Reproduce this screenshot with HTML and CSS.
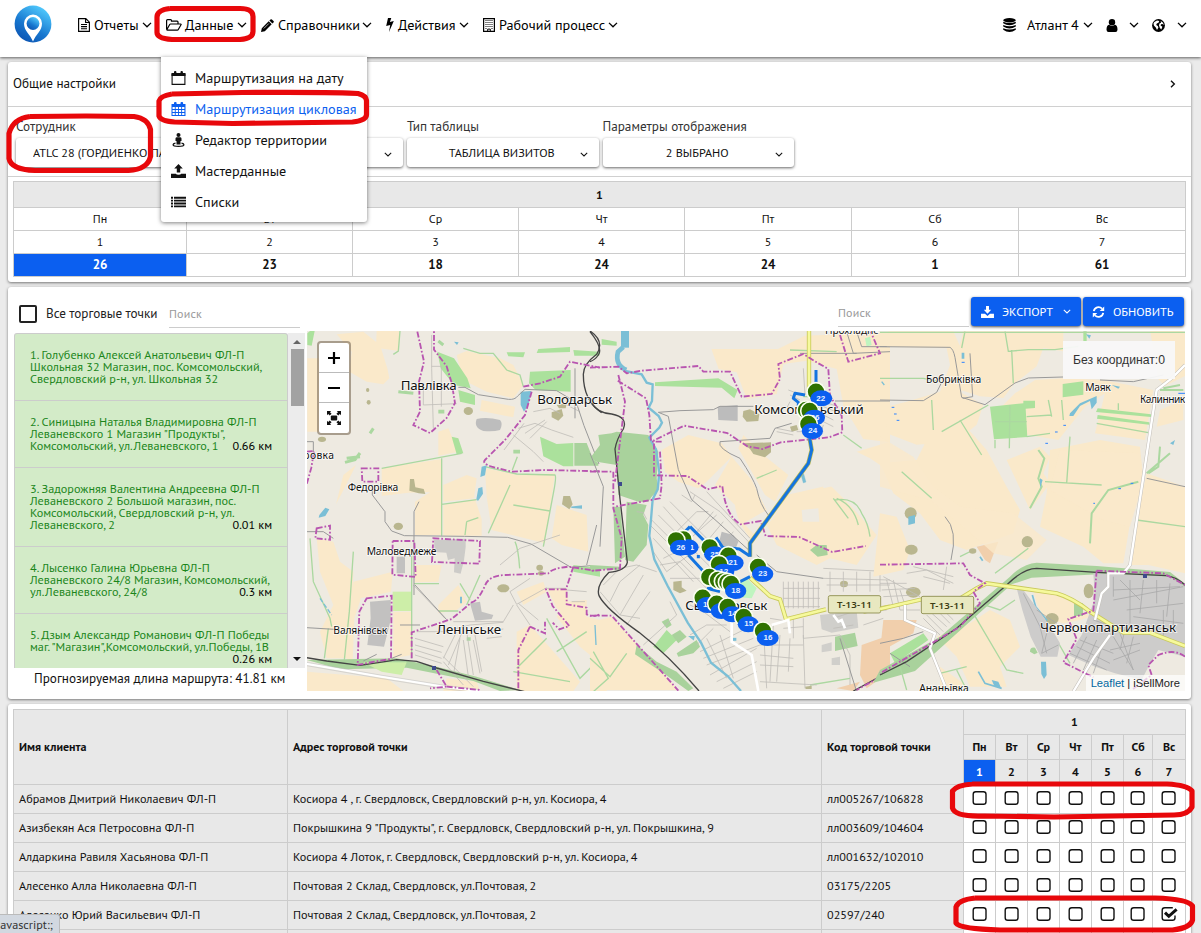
FILE: index.html
```html
<!DOCTYPE html>
<html lang="ru">
<head>
<meta charset="utf-8">
<title>iSellMore</title>
<link rel="stylesheet" href="styles.css">
</head>
<body>
<svg class="defs" width="0" height="0">
  <symbol id="chev" viewBox="0 0 10 6"><path d="M1 .9 5 4.8 9 .9" fill="none" stroke="currentColor" stroke-width="1.3"/></symbol>
  <symbol id="file" viewBox="0 0 12 14"><path d="M.6.6h7.2l3.6 3.6v9.2H.6zM7.6.8v3.7h3.7M3 6.5h6M3 8.6h6M3 10.7h6" fill="none" stroke="currentColor" stroke-width="1.15"/></symbol>
  <symbol id="folder" viewBox="0 0 16 12"><path d="M.6 10V1.6Q.6.7 1.5.7H4.600q.9 0 .9.9v.6h5.600q.9 0 .9.9v1.800M.8 10.800 3.700 5.500q.3-.5.9-.5h10q.9 0 .4.8l-2.700 4.700q-.3.6-1 .6H1.400q-.8 0-.8-.9" fill="none" stroke="currentColor" stroke-width="1.200"/></symbol>
  <symbol id="pencil" viewBox="0 0 13 13"><path fill="currentColor" d="M0 13 .8 9.200 7.700 2.300 10.700 5.300 3.800 12.200ZM8.400 1.600 9.500.5q.7-.7 1.400 0l1.600 1.600q.7.7 0 1.400l-1.100 1.100Z"/><path d="m2.800 9.500 5-5" stroke="#fff" stroke-width=".7"/></symbol>
  <symbol id="bolt" viewBox="0 0 8 14"><path fill="currentColor" d="M2 0h3.300L3.900 3.900 7.800 3 3 14 4.200 6.900.2 7.900Z"/></symbol>
  <symbol id="building" viewBox="0 0 12 14"><path d="M.6.600h10.800v12.800H.6z" fill="none" stroke="currentColor" stroke-width="1.200"/><path d="M2.500 2.500h7M2.500 4.500h7M2.500 6.500h7M2.500 8.500h7" stroke="currentColor" stroke-dasharray="1 1"/><path d="M2.500 10.500h1M8.500 10.500h1M4.700 13.500v-2.400h2.600v2.400" stroke="currentColor" fill="none"/></symbol>
  <symbol id="db" viewBox="0 0 13 14"><g fill="currentColor"><ellipse cx="6.500" cy="2.200" rx="6.300" ry="2.200"/><path d="M.2 3.700q6.300 2.600 12.600 0v1.500q-6.300 4-12.600 0zM.2 7q6.300 2.600 12.600 0v1.500q-6.300 4-12.600 0zM.2 10.300q6.300 2.600 12.600 0v1.400q-6.300 4.500-12.600 0z"/></g></symbol>
  <symbol id="user" viewBox="0 0 12 13"><g fill="currentColor"><circle cx="6" cy="3.200" r="3.200"/><path d="M3 5.800Q6 8 9 5.800q2.500.6 2.500 5-.1 2.200-2 2.200h-7q-1.900 0-2-2.200 0-4.400 2.500-5"/></g></symbol>
  <symbol id="globe" viewBox="0 0 13 13"><circle cx="6.500" cy="6.500" r="6.400" fill="currentColor"/><path fill="#fff" d="M2.400 2.900 5 1.500 7.300 2 6.500 3.800 4.800 4.400 4.200 6 5.800 7.100 6.400 8.500 5 11 3.800 8.400 1.900 6.600 1.500 4.600ZM8.700 1.900 11 3.700 11.800 6 10.500 5 9 5.200 8.600 6.600 10.400 7.800 9.300 10.600 7.900 9 7 6.600 7.400 4.600 9 3.800Z"/></symbol>
  <symbol id="cal" viewBox="0 0 14 14"><path d="M.6 3.200h12.800v10.200H.6z" fill="none" stroke="currentColor" stroke-width="1.100"/><path fill="currentColor" d="M0 2h14v3H0z"/><rect x="2.500" width="2.400" height="4" rx="1" fill="currentColor"/><rect x="9" width="2.400" height="4" rx="1" fill="currentColor"/></symbol>
  <symbol id="calgrid" viewBox="0 0 14 14"><path fill="currentColor" d="M0 2h14v12H0z"/><rect x="2.500" width="2.600" height="4" rx="1" fill="currentColor"/><rect x="9" width="2.600" height="4" rx="1" fill="currentColor"/><path d="M1 6h12M1 9h12M1 12h12" stroke="#fff" stroke-width="1.900" stroke-dasharray="2.300 .9"/></symbol>
  <symbol id="street" viewBox="0 0 12 14"><g fill="currentColor"><circle cx="6" cy="2" r="2"/><path d="M4 4.200h4q1 .2 1 1.400V8H8v3.500H4V8H3V5.600q0-1.200 1-1.400"/></g><path d="M3 10.200Q.6 10.700.6 11.700.6 13.300 6 13.300t5.400-1.600q0-1-2.400-1.500" fill="none" stroke="currentColor" stroke-width="1.300"/></symbol>
  <symbol id="upload" viewBox="0 0 14 13"><path fill="currentColor" d="M7 0l4 4.200H8.600V8H5.400V4.200H3zM0 9h4.500q.4 1 2.500 1t2.500-1H14v4H0z"/></symbol>
  <symbol id="download" viewBox="0 0 14 13"><path fill="currentColor" d="M5.400 0h3.200v4H11L7 8.300 3 4h2.400zM0 8.500h4.300L7 10.700 9.700 8.500H14V13H0z"/></symbol>
  <symbol id="list" viewBox="0 0 15 11"><path d="M0 1.200h2M3 1.200h12M0 4.100h2M3 4.100h12M0 7h2M3 7h12M0 9.900h2M3 9.900h12" stroke="currentColor" stroke-width="1.900"/></symbol>
  <symbol id="refresh" viewBox="0 0 12 12"><path d="M1.300 5.200A4.800 4.800 0 0 1 9.500 2.600M10.700 6.800A4.800 4.800 0 0 1 2.500 9.400" fill="none" stroke="currentColor" stroke-width="1.800"/><path fill="currentColor" d="M11.700.4v4.500H7.200zM.3 11.600V7.100h4.500z"/></symbol>
  <symbol id="expand" viewBox="0 0 14 14"><path fill="currentColor" d="M0 0h4.200L3 1.200 4.600 2.700 2.700 4.600 1.200 3 0 4.200zM14 0v4.200L12.800 3l-1.500 1.600-1.900-1.900L11 1.200 9.800 0zM0 14V9.800L1.200 11l1.500-1.600 1.900 1.900L3 12.800 4.200 14zM14 14H9.800l1.200-1.200-1.600-1.500 1.900-1.900 1.500 1.600L14 9.800z"/><rect x="3.800" y="4.400" width="6.400" height="5.200" rx="1" fill="currentColor"/></symbol>
  <symbol id="box" viewBox="0 0 18 16"><rect x="1.700" y="1.700" width="12.800" height="12.600" rx="2.600" fill="none" stroke="currentColor" stroke-width="1.400"/></symbol>
  <symbol id="boxon" viewBox="0 0 18 16"><path d="M14.500 9.500v2.200q0 2.600-2.600 2.600H4.300q-2.600 0-2.600-2.600V4.300q0-2.600 2.600-2.600h8" fill="none" stroke="currentColor" stroke-width="1.400"/><path d="m4.500 6.700 3.800 3.600 7.800-7" fill="none" stroke="currentColor" stroke-width="3"/></symbol>
</svg>

<header class="topbar">
  <svg class="logo" viewBox="0 0 38 38">
    <defs><linearGradient id="lg" x1="0" y1="1" x2=".6" y2="0"><stop offset="0" stop-color="#0848a8"/><stop offset=".5" stop-color="#1878d0"/><stop offset="1" stop-color="#4cc4fa"/></linearGradient></defs>
    <circle cx="19" cy="19" r="18.400" fill="url(#lg)"/>
    <path d="M19 36.500C16 29 10 26 10 18.500A9 9 0 0 1 28 18.500C28 26 22 29 19 36.500Z" fill="#fff"/>
    <circle cx="19" cy="18.500" r="6.400" fill="url(#lg)"/>
  </svg>
  <nav class="nav">
    <a class="nav-item n1"><svg class="i12x14"><use href="#file"/></svg><span>Отчеты</span><svg class="chev"><use href="#chev"/></svg></a>
    <a class="nav-item n2"><svg class="i16x12"><use href="#folder"/></svg><span>Данные</span><svg class="chev"><use href="#chev"/></svg></a>
    <a class="nav-item n3"><svg class="i13"><use href="#pencil"/></svg><span>Справочники</span><svg class="chev"><use href="#chev"/></svg></a>
    <a class="nav-item n4"><svg class="i8x14"><use href="#bolt"/></svg><span>Действия</span><svg class="chev"><use href="#chev"/></svg></a>
    <a class="nav-item n5"><svg class="i12x14"><use href="#building"/></svg><span>Рабочий процесс</span><svg class="chev"><use href="#chev"/></svg></a>
  </nav>
  <div class="account">
    <a class="acc a1"><svg class="i13x14"><use href="#db"/></svg><span>Атлант 4</span><svg class="chev"><use href="#chev"/></svg></a>
    <a class="acc a2"><svg class="i12x13"><use href="#user"/></svg><svg class="chev"><use href="#chev"/></svg></a>
    <a class="acc a3"><svg class="i13"><use href="#globe"/></svg><svg class="chev"><use href="#chev"/></svg></a>
  </div>
</header>

<div class="menu">
  <a class="menu-item"><svg class="mi"><use href="#cal"/></svg><span>Маршрутизация на дату</span></a>
  <a class="menu-item active"><svg class="mi"><use href="#calgrid"/></svg><span>Маршрутизация цикловая</span></a>
  <a class="menu-item"><svg class="mi"><use href="#street"/></svg><span>Редактор территории</span></a>
  <a class="menu-item"><svg class="mi"><use href="#upload"/></svg><span>Мастерданные</span></a>
  <a class="menu-item"><svg class="mi"><use href="#list"/></svg><span>Списки</span></a>
</div>

<main class="page">
  <section class="card settings">
    <div class="settings-head"><span>Общие настройки</span><svg class="right" viewBox="0 0 6 8"><path d="M1 .8 4.300 4 1 7.200" fill="none" stroke="#111" stroke-width="1.400"/></svg></div>
    <div class="filters">
      <label class="field"><span class="lbl">Сотрудник</span><span class="select first"><b>ATLC 28 (ГОРДИЕНКО ПАВЕЛ)</b></span></label>
      <label class="field"><span class="lbl">&nbsp;</span><span class="select"><b></b><svg class="chev s"><use href="#chev"/></svg></span></label>
      <label class="field"><span class="lbl">Тип таблицы</span><span class="select"><b>ТАБЛИЦА ВИЗИТОВ</b><svg class="chev s"><use href="#chev"/></svg></span></label>
      <label class="field"><span class="lbl">Параметры отображения</span><span class="select"><b>2 ВЫБРАНО</b><svg class="chev s"><use href="#chev"/></svg></span></label>
    </div>
    <table class="week">
      <colgroup><col class="w173"><col class="w166"><col class="w166"><col class="w166"><col class="w167"><col class="w167"><col class="w167"></colgroup>
      <tr class="wh"><th colspan="7">1</th></tr>
      <tr><td>Пн</td><td>Вт</td><td>Ср</td><td>Чт</td><td>Пт</td><td>Сб</td><td>Вс</td></tr>
      <tr><td>1</td><td>2</td><td>3</td><td>4</td><td>5</td><td>6</td><td>7</td></tr>
      <tr class="tot"><td class="sel">26</td><td>23</td><td>18</td><td>24</td><td>24</td><td>1</td><td>61</td></tr>
    </table>
  </section>

  <section class="card route">
    <div class="toolbar">
      <span class="check"></span><span class="all">Все торговые точки</span>
      <span class="search">Поиск</span>
      <span class="search far">Поиск</span>
      <a class="btn exp"><svg class="bi"><use href="#download"/></svg><span>ЭКСПОРТ</span><svg class="chev s"><use href="#chev"/></svg></a>
      <a class="btn upd"><svg class="bi"><use href="#refresh"/></svg><span>ОБНОВИТЬ</span></a>
    </div>
    <div class="route-body">
      <div class="side">
        <div class="list-wrap">
          <div class="list">
            <div class="stop"><p>1. Голубенко Алексей Анатольевич ФЛ-П<br>Школьная 32 Магазин, пос. Комсомольский,<br>Свердловский р-н, ул. Школьная 32</p></div>
            <div class="stop"><p>2. Синицына Наталья Владимировна ФЛ-П<br>Леваневского 1 Магазин "Продукты",<br>Комсомольский, ул.Леваневского, 1</p><i>0.66 км</i></div>
            <div class="stop"><p>3. Задорожняя Валентина Андреевна ФЛ-П<br>Леваневского 2 Большой магазин, пос.<br>Комсомольский, Свердловский р-н, ул.<br>Леваневского, 2</p><i>0.01 км</i></div>
            <div class="stop"><p>4. Лысенко Галина Юрьевна ФЛ-П<br>Леваневского 24/8 Магазин, Комсомольский,<br>ул.Леваневского, 24/8</p><i>0.3 км</i></div>
            <div class="stop"><p>5. Дзым Александр Романович ФЛ-П Победы<br>маг. "Магазин",Комсомольский, ул.Победы, 1В<br>&nbsp;</p><i>0.26 км</i></div>
          </div>
          <div class="scroll"><span class="up"></span><span class="thumb"></span><span class="down"></span></div>
        </div>
        <div class="total">Прогнозируемая длина маршрута: 41.81 км</div>
      </div>
      <div class="map">
        <svg class="tiles" viewBox="307 331 878 360">
          <rect x="307" y="331" width="878" height="360" fill="#eeeae1"/>
          <!-- west -->
          <g transform="translate(300 325) scale(.33333)">
            <g class="field-a">
              <path d="M110 28 190 20 240 60 262 130 268 160 250 178 200 170 148 140 155 80ZM230 18h68l-2 60-68-10ZM22 100h35v220H22ZM470 90 500 78 600 100 640 120 670 180 640 220 560 200 500 170 480 130ZM545 225l100 20-5 32-100-20ZM415 320l30-10 30 70-60 12ZM130 450l38-30-30 60-30 58ZM245 430l180-28v98l-100 3-80 10ZM345 530l80-50v150h-80ZM430 540l95-18 20 60 0 50H430ZM555 430l100 20 110-5-30 210-160-40-15-100ZM430 480l70-30 30 10-8 60-92 10ZM770 540l90 30 5 110-80-20-30-20ZM50 640l50 10 20 60 40 30-8 260H80l-20-80 40-80-40-100ZM160 770l118-30-5 60-90 20-20 60-5 130h-18ZM280 860h55v130l-55 10ZM345 720h80l-10 50-70 2ZM415 840l60-60 25 50-30 25-55 10ZM650 800l80-30 10 30-70 40ZM740 790l60 0 10 90-40-30ZM800 830l60-5 0 50 40 10v130l-60-50-70-90ZM650 920l40-20 150 170-20 28H650ZM20 1040l240 20 50 38H20ZM440 1060l90 10 10 28H430Z"/>
            </g>
            <g fill="#abe19c">
              <path d="M30 18h14L35 62 22 60V25ZM412 80l50 20 40 60 10 30-50-10-40-50ZM475 195l50 15v30l-45-10ZM690 140l122-5v65l-105-5-20-20ZM620 82h55l-5 15-45-3ZM715 72l95-6v15l-100 3ZM820 75l78 5v12h-75ZM720 335l50 22 50-3v70h-30l-60-30ZM455 335l20 5 15 45-20 3Z"/>
              <path d="M823 354l37 0 20 50 15 10v8h-72Z" fill="#a9d29c"/>
              <path d="M278 800h57v58h-57Z" fill="#cdeea8"/>
              <path d="M20 1005l270-5 120 25 120 30 130 40-60 3-80-30-200-40-200 5Z" fill="#a9d29c"/>
              <path d="M190 1012l130 0 -15 38-60-10Z" fill="#cdeea8"/>
              <path d="M820 720l80 10v25l-80-15Z"/>
            </g>
            <g class="hedge">
              <path d="M245 430l240-45M425 400v232M425 538l105-14M555 425l95 22 115 3q5 5-5 55l-30 160M630 480l-65 145M652 395l-15 40M640 540l110 18M490 70l50 15 40 0 40 50 40 15 10 35M300 18l-5 60-15 10M160 680l-12 180-15 145M30 640l10 130 50 110 5 25M85 910l-12 90M335 690v310M342 776h75M415 858h60M500 590l-5 40M500 590l35-12M645 650q10 20 14 80M740 880l100 180 50-50M650 1030l90-90M700 980l40-40M770 980l90-60M640 1040l170 30M480 775l30 50M540 750l-40 90"/>
            </g>
            <g fill="#7bbfd6"><path d="M662 200l32-2-8 40-14 22-10-20ZM545 425l15-4-5 30-14 5ZM535 490l12-4 2 20-15 22-5-5ZM58 570l18-22 12 5-12 20-20 5ZM480 815h6v20h-6ZM810 545l36-4v10l-30-2ZM462 50l14 2-5 8Z"/><path d="M60 820l35 50M885 900v60" stroke="#7bbfd6" stroke-width="4" fill="none" stroke-dasharray="14 6"/></g>
            <g fill="#bdbdbd"><path d="M530 282q30-8 70 3 10 10 0 30-20 6-50 3-30-10-20-36Z"/><path d="M402 645l95-4v25l-5 40-10 40-20-4 2-42-20 5-5-22-35-2Z" opacity=".7"/><path d="M290 695h25v50h-25ZM210 830l62-5v60l-20 80-50-5 10-80ZM510 835l30-5 5 30 35 10-5 12-50 5Z" opacity=".9"/></g>
            <g fill="#b9b68f"><path d="M330 462l12 0 4 25 25 5 5 15-20-2-28-8ZM755 262l30-10 5 20-15 15-20-10ZM770 240l30-5-3 15h-20ZM790 513l20 0 8 25-10 15-22-15Z"/><ellipse cx="505" cy="258" rx="14" ry="12"/><ellipse cx="66" cy="343" rx="12" ry="8"/><ellipse cx="295" cy="604" rx="14" ry="11"/><ellipse cx="610" cy="790" rx="18" ry="12"/><ellipse cx="719" cy="728" rx="10" ry="9"/><ellipse cx="723" cy="745" rx="9" ry="7"/><ellipse cx="203" cy="195" rx="5" ry="6"/><ellipse cx="206" cy="232" rx="6" ry="7"/></g>
            <g class="hedge"><path d="M140 400l40-5M135 412l30-8 15-20M295 200l45 5M210 325l10-15M430 60l-15-12" stroke-width="9"/><path d="M640 380l20 0M415 260h18M500 942h12" stroke-width="11"/></g>
            <g class="street">
              <path d="M395 30v100l5 180M370 180l0 60 100-4M424 125v120M395 124h30M600 720l60-50 120-40M612 375l60-80M640 330l60 50 30 30M655 310l50-15 50 20 65 22M675 325l60-40M690 340l50-50M700 260l50-10 30 15M800 240l40 20M340 780l95 100M650 840l40 60M655 835l60 50M640 840l-30 50-150 0M690 760l-60 40 20 38 90-50M740 790h60M800 795l60 5M815 830l40 0M350 920l80 0 80-20 100-8M345 940l85 25M345 960l80 22M345 975l80 25M345 990l80 25M430 1000l40-80M445 1020l40-95M500 920l20 130M525 930l20 110M480 940l-20 110M560 940l45-5M560 920l50-8M490 945l15 110M520 945l20 100M430 1010l60 70M430 995l90 90"/>
            </g>
            <g fill="none" stroke="#999" stroke-width="3"><path d="M475 187h20l40 22 90 14q20 2 28-10l22-20 95 4 50 30 12 15 20 60 45 115M825 130v150M20 350h20v55M217 480v30l38 50v30l20 28 38 14 180 2 130 3 70 20 120 70 60-5M342 810V560l15-30M20 620h50l30 20M20 908l100 6M345 780l95 104M275 1000l30-12M190 1008l40-20M300 900h60M890 600l-30 120"/></g>
            <g fill="none" stroke="#fff" stroke-width="7"><path d="M20 1016l220 38 200 32 100 12"/></g><path d="M20 1012l220 38 200 32 100 12M20 1022l220 38 200 32 100 12" fill="none" stroke="#bbb" stroke-width="1.500"/>
            <path d="M20 998l60 10 100 13 80-12 30-5 60 5 60 20 140 40 140 35M870 18q45 30 20 70-40 30-40 60 0 80 55 115" class="rail"/>
            <rect x="396" y="1023" width="12" height="12" fill="#3e4a8c"/>
            <g class="border">
              <path d="M352 20l20 90-15 60 3 90-20 40 50 24 50-45 25-45-10-60-15-50-38-50 0-30 0-32M670 185l50-10 60-20 30-45 90 18M695 200l-20 70-60 75-60 60q-10 10 20 20l60 15 100-5 170 4M20 380l22-2-8 50-14 50M185 430h50v40h-48ZM50 610l40-8v42l-44-4ZM278 648h65l4 108-70-7ZM400 640l140 8-2 68-142-5ZM200 820l75-8-2 190-50 8-50 10 5-160ZM335 1000v-78l120-40 60-50q20-5 40-50 10-30 60-32l130-5q10-15 60-20l80 12M820 725l-22 68h-60l20 50 50 60-30 10-20-20M690 905l-35 70 0 120M690 905l45 20 0-35M800 800v38l60 10v20q20 10 40 0M410 1035l30 50-50 5M440 1085l100 10"/>
            </g>
            <g class="place">
              <text class="pl" x="302" y="194" textLength="168">Павлівка</text>
              <text class="pl" x="712" y="237" textLength="224">Володарськ</text>
              <text x="143" y="499" textLength="152">Федорівка</text>
              <text x="10" y="403" textLength="92">ровка</text>
              <text x="200" y="689" textLength="209">Маловедмеже</text>
              <text x="100" y="928" textLength="162">Валянівськ</text>
              <text class="pl" x="410" y="926" textLength="193">Ленінське</text>
            </g>
          </g>
          <!-- centre -->
          <g transform="translate(590 325) scale(.33333)">
            <g class="field-a">
              <path d="M364 72l200 0 80-40 256-10v330l-80-10-60-100-20-110-90-25-70 10-20 90-90 15-30-80-54-10ZM215 375l80-45 100 25 30 40-80 80-20 15-60-20-40-30ZM425 395l60 70 45 90-70 40 40 40-20 5q-40-50-45-100l-60-60ZM460 330l60 60 75 60-40 80-30-20-40-70-40-70ZM590 510l130-30 60 60 80 90-60 90-80-20-40 20-120-60-30-60 20-20ZM5 890l60-15 200 220H100l-60 0-35-10ZM0 960l60 100-10 38H0ZM800 380l100-30v90l-60-40Z"/>
              <path d="M815 960l85-30v110l-70 50-20-40ZM740 1090l70-20-20 28Z" fill="#f1cfac"/>
            </g>
            <path d="M635 555l50-5 3 40-50 0ZM700 450l40 0 5 30-45 10Z" fill="#eeeae1"/>
            <g fill="#a9d29c">
              <path d="M80 320l95 10 30 50-5 80 5 35-20 20-10 15-30 0-60-20-5-90-60-10-20-10 30-40-5-30 40-5ZM110 530l60 10-10 30 15 30-5 60-40 50-25-5ZM70 545l20 0 15 150-30 20Z"/>
              <path d="M195 172l190-12 58 35-10 25-38-32-200-5Z" fill="#abe19c"/><path d="M35 42l45 8v12l-45-3ZM230 915l30 30-40 40-30-20Z" fill="#abe19c"/>
              <path d="M140 960l60 50 60 30 50 50-15 8-70-50-90-60ZM215 890l20-10 10 20-15 10ZM245 930l25-15 20 20-25 20ZM260 985l60-40 10 20-20 20-45 10ZM660 675l20-15 30 0 3 30-30 5ZM735 935l60-12 8 40-68 15ZM0 720l90 5v10l-90-3Z"/>
              <path d="M825 40l15-5 5 25-15 5ZM430 770l40-10 30 30-15 30-40-3Z" fill="#bff5c0"/>
            </g>
            <g class="hedge"><path d="M600 75l140 5M500 460l60-25M760 330l55 40M730 520l45 60M735 525q60-10 80 40 20 30 25 70M740 520q50 20 65 80M640 215h60M10 980l45 80-45 40M0 1000l60 55 50-70M660 1080l120-20"/></g>
            <g fill="#bcbcbc"><path d="M383 245l60-5v48l-58-3ZM395 620l35 10 15 20-10 25-50-15Z"/><path d="M690 870l110-12 5 50-80 15-30-10ZM695 960l30-8v25l-30 5ZM725 1000l25-5v25l-25 0Z" opacity=".6"/></g>
            <g fill="#b9b68f"><path d="M460 258l20-5 28 15-3 20-35 2-12-15ZM458 355l85-3v30l-18 15-35-10-10-15ZM250 770l25-3 0 20 15 10-20 8-20-10ZM600 305l20-5 5 15-20 5ZM645 1085l20-3v10h-18Z"/><ellipse cx="762" cy="777" rx="12" ry="10"/></g>
            <g class="street">
              <path d="M185 585l60 60M205 570l190 190M220 545l170 190M240 530l180 180M180 600l130 130M190 640l120 130M275 510l30 20 10-20M260 620l60-60 35 0M290 650l90-80M190 680l40 60 80-60M220 700l60-30M210 720l60-10 80 80M240 760l90 0M140 560l20 3 10 20M40 780l50-50 50-10 60 20M60 830l30-60 60-50M30 800l60 70 60 10M90 870l70-120M110 900l70-100M160 960l100-90-20-40M300 930l50-30 60 0M320 960l50-50M330 980l140-70M340 1000l150-60M350 1020l160-60M300 840l40 20 80 60M360 1050l140-80M380 1070l120-60M400 1090l100-50M350 940l60 120M390 930l40 130M300 500l90 60 90 95M350 500l130 140M370 560l-50 60M400 590l-50 60M430 620l-40 50M510 960h130M510 990l100 10M510 1020l100 5M520 900l10 190M550 900l-10 170M570 930l-10 140M600 940l-5 100M640 930l5 160M510 1070l170 10M580 770v85M595 770v80M610 770v80M625 770v80M640 770v80M655 770v80M670 770v80M685 770v80M580 790h110M580 820h110M580 845h110M540 880l60 10M580 910l60-5M610 880v60M640 880v60M700 730l200 10M700 760l200 5M710 780h190M720 740v60M760 740v60M800 740v60M840 740v60M870 740v60M850 860l40-5M730 880l60-20M730 910l60-10M820 900l60-20M640 940l110-10 30 60 0 90M640 130l5 80M595 195l40 15M600 210l30 15M600 230l-10 20M685 225l60 20M690 265l40 20M690 285l40 20M700 245l50 20M700 300l-10 30M560 310l50 10M560 320l50 10M620 320h80"/>
            </g>
            <g fill="none" stroke="#999" stroke-width="3"><path d="M205 262l65-5 100-3 20-10h100M205 262l30 12 30 160 40 90 70 60 100 90M390 350q-10 20 60 50 40 60 50 90 10 50 35 80M390 350l150-10 15-30 50-15M500 690l60 50 140 20M735 228h165M630 85h170M770 20l20 65 110-5M800 20l15 45h85M0 385l40 100-10 180M750 940l50 160"/></g>
            <g fill="none" stroke="#7bbfd6"><path d="M105 18v50" stroke-width="24"/><path d="M100 66l-16 14q-10 40 25 55" stroke-width="14"/><path d="M105 138l50 10 15 25 18 5-2 50-10 20 30 25 10 20-8 15-30 30 20 35 10 70-5 50-15 30-5 60-5 50 15 70 40 80 60 110 40 60 30 60 50 40 40 45" stroke-width="7"/><path d="M633 450l8-4 7 25-8 3Z" fill="#7bbfd6"/><path d="M425 943h14" stroke-width="9"/><path d="M300 935l12 0-2 8Z" fill="#7bbfd6" stroke-width="4"/><path d="M875 170l8 10M15 900l3 60" stroke-width="4"/></g>
            <path d="M0 20q40 50 25 70-10 15-25 20M5 235q20 30 60 32 50 10 35 45-20 30-25 60l15 150 22 190q-5 25-55 30-40 40-30 70 20 40 120 110 90 70 180 176M790 1098l110-60" class="rail"/>
            <rect x="84" y="471" width="12" height="12" fill="#3e4a8c"/>
            <path class="cas" d="M657 18v180M480 758l60 55 30 10 18 60 120-30M820 860l80-15"/><path class="main" d="M657 18v180M480 758l60 55 30 10 18 60 120-30M820 860l80-15"/>
            <path d="M425 860v90l60 40 20 108M545 900l50-15 5 40M730 870l15 20 10-5 10 25" fill="none" stroke="#fff" stroke-width="8"/>
            <g class="border">
              <path d="M0 128l85-3 25 20 45-8 170-14 15 17h80l35 75 90-8 25-45-5-45 75-30 40 25 35 20 5 80 35 60 2 50-40 15-145 15-55 20-45-8-60-40-130-22-90 44v105l100 2 60 40 45-10q10 90 55 115l60-10 15 45 100 3 100 45 100-18M210 380l5 100-5 40-135 25M215 350l-32 0-5-80-10-50-88-55M85 150l20 80-30 240M0 440h70v110l25 90-5 90-90 8M0 872h65l200 225M750 30l25 80 95-25-30-70M900 1040l-100 55"/>
            </g>
            <path class="casedge" d="M659 340l6 35-10 40-175 240v40"/>
            <g class="track"><path d="M659 340l6 35-10 40-175 240v40M678 135v50M645 210l-30-5-5 15 15 12 0 25M300 605l60 60M295 690l60 65M378 637l20 30 50 5 30 20M480 755l-40 20M300 605l-20 20M350 790l40 10M325 690v10M355 790l80-20M335 835l180 90" stroke-width="9"/></g>
            <g class="place">
              <text x="705" y="27" textLength="160">Прохладнє</text>
              <text class="pl" x="493" y="267" textLength="328">Комсомольський</text>
              <text class="pl" x="286" y="854" textLength="246">Свердловськ</text>
            </g>
            <g class="shield"><rect x="715" y="812" width="157" height="52" rx="5"/><text x="741" y="849" textLength="104">Т-13-11</text></g>
            <g class="pin">
              <g transform="translate(678 200)"><circle r="27"/><ellipse cx="16" cy="20" rx="33" ry="24"/><text x="14" y="28">22</text></g>
              <g transform="translate(648 255)"><circle r="27"/></g>
              <g transform="translate(659 258)"><circle r="27"/><ellipse cx="14" cy="20" rx="32" ry="24"/><text x="16" y="28">26</text></g>
              <g transform="translate(655 297)"><circle r="27"/><ellipse cx="12" cy="21" rx="32" ry="24"/><text x="13" y="28">24</text></g>
              <g transform="translate(280 643)"><circle r="27"/><ellipse cx="14" cy="24" rx="32" ry="24"/><text x="26" y="32">1</text></g>
              <g transform="translate(258 646)"><circle r="27"/><ellipse cx="14" cy="22" rx="32" ry="24"/><text x="14" y="29">26</text></g>
              <g transform="translate(359 667)"><circle r="27"/><ellipse cx="15" cy="21" rx="32" ry="24"/><text x="15" y="28">25</text></g>
              <g transform="translate(415 692)"><circle r="27"/><ellipse cx="14" cy="22" rx="32" ry="24"/><text x="14" y="28">21</text></g>
              <g transform="translate(387 718)"><circle r="27"/><ellipse cx="14" cy="22" rx="32" ry="24"/><text x="14" y="28">12</text></g>
              <g transform="translate(504 726)"><circle r="27"/><ellipse cx="14" cy="21" rx="32" ry="24"/><text x="14" y="28">23</text></g>
              <g transform="translate(358 756)"><circle r="27"/></g>
              <g transform="translate(384 765)"><circle r="27"/></g>
              <g transform="translate(400 769)"><circle r="27"/></g>
              <g transform="translate(412 772)"><circle r="27"/></g>
              <g transform="translate(423 777)"><circle r="27"/><ellipse cx="14" cy="21" rx="32" ry="24"/><text x="14" y="28">18</text></g>
              <g transform="translate(338 818)"><circle r="27"/><ellipse cx="14" cy="22" rx="32" ry="24"/><text x="14" y="29">17</text></g>
              <g transform="translate(380 836)"><circle r="27"/><ellipse cx="14" cy="22" rx="32" ry="24"/></g>
              <g transform="translate(413 846)"><circle r="27"/><ellipse cx="14" cy="22" rx="32" ry="24"/><text x="14" y="28">14</text></g>
              <g transform="translate(461 876)"><circle r="27"/><ellipse cx="14" cy="22" rx="32" ry="24"/><text x="15" y="28">15</text></g>
              <g transform="translate(519 918)"><circle r="27"/><ellipse cx="14" cy="21" rx="33" ry="24"/><text x="15" y="28">16</text></g>
            </g>
          </g>
          <!-- east -->
          <g transform="translate(880 290) scale(.33333)">
            <g class="field-a">
              <path d="M25 124h195l20 45 5 140 65 35-20 60-60 50-120 10L20 430V350l60-15 100-30 30-80-10-50-180-5ZM250 124h300v60l-60-10-20 55-70 55-30 40-70-5-60-20-20-60ZM550 265l120 5 150 30-25 150-150-20 30-120-60 40-80 100-120-20-70-60 60-60 60-40ZM160 410l80-20 80 90 60 110 40 70-20 70-140 50-80-30-60-80-80-60-30-70 0 0-10-20 110-10ZM380 510l100-40 30 30-20 50 20 30-60 80ZM510 480l150-30 120 20 10 100-40 130-20 120-60 0-60-50-130-60 20-100ZM0 670l50 10 40 100-20 60-90 20ZM800 60v60l100-0 15 8v130l-60 30-20-20ZM800 550l115 40v260l-110-25-50 0 20-160ZM830 410l80-20v-60l-70 30ZM460 900l100 20 70 60-30 10-50 10-60-20-20-40ZM270 1000l60-40 60 30 30 80-60 60 20 60-110 0-40-90-60-60ZM180 1130l70 50-10 20h-60Z"/>
              <path d="M290 770l65-15-25 65-15-10ZM10 990l100 0-10 40-80 45-20 10ZM0 1080l30 20 0 50-30 20Z" fill="#f1cfac"/>
            </g>
            <path class="field-a" d="M0 440l100 60 60 90 80 60 160 20 100 80-60 60-100-20-90-80-100-80-150-40ZM540 480l240 10 10 90-40 130-80-20-160-90Z" opacity=".8"/>
            <g fill="#abe19c"><path d="M330 350l100-10v-8l35 0v22l-28 2 5 85-100 7ZM548 282l62-8v40l-62 8ZM610 124h10v30h-10ZM653 355l160 18v8l-165-15ZM653 375l155 22v7l-157-18Z"/><path d="M30 1090l100-60 15 20-100 70Z"/><path d="M0 1140l180-100 210-180q40-40 80-42l180 10 220 18 45 35v20l-60-28-200-20-200 10-60 20-90 80-200 180-125 35Z" fill="#a9d29c"/><path d="M582 940h27v38h-27ZM450 1085q0-15 15-12l8 15-10 5Z" fill="#a9d29c"/></g>
            <g class="hedge"><path d="M0 127h915M395 180l5 100M375 124l10 60 60-5h80l70-10M0 265h130l50 10M155 330l5 90M240 390l65 105M185 425l140-80M345 395h95M390 345l-2 130M345 450v25M440 440l70-10M440 380l75-5M505 330l10 50M545 330l5 60M495 575l170 10M570 440l-10 140M770 690l145 20M650 400l155 28M715 340v20M65 545l90 80M280 970l100 170 50 10M300 940l60 20 45-30M530 1050l40 70M180 1150l80-20M230 1140l30 60M60 1130l20 70M240 800l40-20M345 850l100-75M255 124l-10 50"/><path d="M475 480l18 25-18 60 10 25-35 65M840 470l-5 60-30 20M870 490l-70 60M630 760l5-90 50-70 90-25M840 300l70 0M850 295l50-10" stroke-width="6"/></g>
            <g fill="#b9b68f"><ellipse cx="92" cy="670" rx="18" ry="18"/><ellipse cx="94" cy="779" rx="19" ry="15"/><ellipse cx="442" cy="755" rx="17" ry="17"/><ellipse cx="278" cy="783" rx="11" ry="8"/><ellipse cx="100" cy="907" rx="22" ry="16"/><ellipse cx="626" cy="903" rx="15" ry="22"/><ellipse cx="516" cy="986" rx="20" ry="17"/></g>
            <g fill="#7bbfd6"><path d="M570 370l30-30 50-22 0 20-15 20-5-25-30 15-20 30-12 0ZM85 680l20-5v25l-20 5ZM480 565l8 5-8 25ZM483 1115l15 0 2 40-8 12-8-15ZM870 460l15-10-5 15ZM695 285l25 5-5 6ZM245 188h8v18h-8ZM335 1170l20 5 8 18-20-5ZM618 133l15 3-5 10Z"/><path d="M457 915l10 35 25 30 10 12M295 1145l20 35 50 15M765 1010l20-25M300 800l8 12" fill="none" stroke="#7bbfd6" stroke-width="5"/><path d="M245 217h9M35 352h8M42 372h8M50 391h8M550 406h8M525 426h8M496 460h8M715 596h8M752 580h8M640 640h5M895 310h20" stroke="#2b82ff" stroke-width="3"/></g>
            <path d="M640 850l130 5 100 5 45 30v210l-80-20-30 50-20 40-80-20-60-20-80-35 40-60 40-110ZM410 895l20 5 60 80 30 45 20 35-8 40-50 0-30-60-25-80Z" fill="#cdcccb"/>
            <g class="street"><path d="M0 880h80M10 860l110 60M5 900l100-5M10 920l100-5M20 870l20 80M40 870l20 90M60 900l20 60M80 850l60-10 80 40M100 830l120 30M130 860l80 20M200 830l-10 70M130 985l50 50M140 975l50 50M150 965l50 45M165 955l45 45M180 950l40 40M190 940l50 30M60 960h60"/><path class="town" d="M700 860v60M720 870l60 60M750 870v130M790 870l-10 100M830 870v70M870 880l-10 100M700 930l210-40M700 900l200-10M740 960l170-20M760 980l150 20M640 990l60 20M600 1050l100 40M590 1070l100 50M570 1090l110 50M620 1040l-40 80M650 1050l-40 90M670 1060l-30 90M700 1040l60 100M720 1030l40 110M690 1080l90-20M700 1110l80-30M740 1000l-20 80M760 1040l-20 80M850 960v90M880 960v60M430 910l50 100 20 80M500 1030l-15 60 50-25M470 960l60 40"/></g>
            <g fill="none" stroke="#999" stroke-width="3"><path d="M0 170l210 2q10 5 15 30l20 120 70 22 90-65 40-15 105-3M0 330l130 2 40-25 15-30M195 680q40 40 18 130M660 270l100 5 90-20M800 565l115 25M270 190l8 130-30 5M0 1060l70-15 60-20M30 1090l60 40"/></g>
            <path d="M0 1155l80-40 150-100 150-130q50-50 90-50l180 12 210 10q30 5 55 28" class="rail"/>
            <rect x="789" y="852" width="12" height="12" fill="#3e4a8c"/>
            <path class="cas" d="M0 957l130-30M225 935l65-40 30-15 210 30q50 15 100 55l100 63h80l105 40"/><path class="main" d="M0 957l130-30M225 935l65-40 30-15 210 30q50 15 100 55l100 63h80l105 40"/>
            <path d="M75 945v45l90 40-15 45 50 125M915 225l-40 40-45 35-15 95-65 430-20 25-45 0 0 40-20 20-20 80M690 1035l-50 70-60 100" class="wroadc"/><path d="M75 945v45l90 40-15 45 50 125M915 225l-40 40-45 35-15 95-65 430-20 25-45 0 0 40-20 20-20 80M690 1035l-50 70-60 100" class="wroad"/>
            <g class="border"><path d="M0 824l250-4 20 35 45 25-35 25 20 35-60 70-240 140M650 842l200 8 65 35M650 842l-10 120-75 25 25 60-40 70 90 45M915 1100q-30-25-80-5l-30 30 10 30-60 45"/></g>
            <g class="place">
              <text x="138" y="279" textLength="166">Бобриківка</text>
              <text x="616" y="302" textLength="76">Маяк</text>
              <text x="780" y="339" textLength="136">Калинник</text>
              <text class="pl" x="480" y="1025" textLength="408">Червонопартизанськ</text>
              <text x="118" y="1206" textLength="148">Ананьївка</text>
            </g>
            <g class="shield"><rect x="124" y="919" width="157" height="52" rx="5"/><text x="150" y="956" textLength="104">Т-13-11</text></g>
          </g>
        </svg>
        <div class="zoomctl"><span><svg viewBox="0 0 14 14"><path d="M7 1v12M1 7h12" stroke="#000" stroke-width="2.200"/></svg></span><span><svg viewBox="0 0 14 14"><path d="M1 7h12" stroke="#000" stroke-width="2"/></svg></span><span><svg viewBox="0 0 14 14"><use href="#expand"/></svg></span></div>
        <div class="nocoord">Без координат:0</div>
        <div class="attr"><a>Leaflet</a> | iSellMore</div>
      </div>
    </div>
  </section>

  <section class="card clients">
    <table class="grid">
      <colgroup><col class="c1"><col class="c2"><col class="c3"><col class="d"><col class="d"><col class="d"><col class="d"><col class="d"><col class="d6"><col class="d7"></colgroup>
      <tr class="h"><th rowspan="3">Имя клиента</th><th rowspan="3">Адрес торговой точки</th><th rowspan="3">Код торговой точки</th><th colspan="7" class="m">1</th></tr>
      <tr class="h"><th class="m">Пн</th><th class="m">Вт</th><th class="m">Ср</th><th class="m">Чт</th><th class="m">Пт</th><th class="m">Сб</th><th class="m">Вс</th></tr>
      <tr class="h"><th class="m sel">1</th><th class="m">2</th><th class="m">3</th><th class="m">4</th><th class="m">5</th><th class="m">6</th><th class="m">7</th></tr>
      <tr><td>Абрамов Дмитрий Николаевич ФЛ-П</td><td>Косиора 4 , г. Свердловск, Свердловский р-н, ул. Косиора, 4</td><td class="code">лл005267/106828</td><td class="k"><svg><use href="#box"/></svg></td><td class="k"><svg><use href="#box"/></svg></td><td class="k"><svg><use href="#box"/></svg></td><td class="k"><svg><use href="#box"/></svg></td><td class="k"><svg><use href="#box"/></svg></td><td class="k"><svg><use href="#box"/></svg></td><td class="k"><svg><use href="#box"/></svg></td></tr>
      <tr><td>Азизбекян Ася Петросовна ФЛ-П</td><td>Покрышкина 9 "Продукты", г. Свердловск, Свердловский р-н, ул. Покрышкина, 9</td><td class="code">лл003609/104604</td><td class="k"><svg><use href="#box"/></svg></td><td class="k"><svg><use href="#box"/></svg></td><td class="k"><svg><use href="#box"/></svg></td><td class="k"><svg><use href="#box"/></svg></td><td class="k"><svg><use href="#box"/></svg></td><td class="k"><svg><use href="#box"/></svg></td><td class="k"><svg><use href="#box"/></svg></td></tr>
      <tr><td>Алдаркина Равиля Хасьянова ФЛ-П</td><td>Косиора 4 Лоток, г. Свердловск, Свердловский р-н, ул. Косиора, 4</td><td class="code">лл001632/102010</td><td class="k"><svg><use href="#box"/></svg></td><td class="k"><svg><use href="#box"/></svg></td><td class="k"><svg><use href="#box"/></svg></td><td class="k"><svg><use href="#box"/></svg></td><td class="k"><svg><use href="#box"/></svg></td><td class="k"><svg><use href="#box"/></svg></td><td class="k"><svg><use href="#box"/></svg></td></tr>
      <tr><td>Алесенко Алла Николаевна ФЛ-П</td><td>Почтовая 2 Склад, Свердловск, ул.Почтовая, 2</td><td class="code">03175/2205</td><td class="k"><svg><use href="#box"/></svg></td><td class="k"><svg><use href="#box"/></svg></td><td class="k"><svg><use href="#box"/></svg></td><td class="k"><svg><use href="#box"/></svg></td><td class="k"><svg><use href="#box"/></svg></td><td class="k"><svg><use href="#box"/></svg></td><td class="k"><svg><use href="#box"/></svg></td></tr>
      <tr><td>Алесенко Юрий Васильевич ФЛ-П</td><td>Почтовая 2 Склад, Свердловск, ул.Почтовая, 2</td><td class="code">02597/240</td><td class="k"><svg><use href="#box"/></svg></td><td class="k"><svg><use href="#box"/></svg></td><td class="k"><svg><use href="#box"/></svg></td><td class="k"><svg><use href="#box"/></svg></td><td class="k"><svg><use href="#box"/></svg></td><td class="k"><svg><use href="#box"/></svg></td><td class="k"><svg><use href="#boxon"/></svg></td></tr>
      <tr><td></td><td></td><td></td><td class="k"></td><td class="k"></td><td class="k"></td><td class="k"></td><td class="k"></td><td class="k"></td><td class="k"></td></tr>
    </table>
  </section>
</main>

<div class="status">javascript:;</div>
<svg class="marks" viewBox="0 0 1201 933">
  <path d="M170 8.500h70q13 0 13 8v15q0 7-13 8l-68 0q-15-1-15-7V17q0-7 13-8.500"/>
  <path d="M172 94l70-1.500q100-.5 116 1 8 2 8.500 7v14q0 6-14 7.500l-120 1.500-58-1.500q-14-1-15.500-6V101q1-5 13-7"/>
  <path d="M30 116.500q60-1 104 0 14 2 16.500 13v27q-3 13-22 14H35q-24-1-26-12l0-25q4-15 21-17"/>
  <path d="M972 784h195q20 1 25 7v16q-4 8-18 8l-120 2-70-1q-29 1-31.500-8V791q4-6 20-7"/>
  <path d="M975 898h180q33 1 37.500 8v14q-2 8-20 10H1000q-40-1-44-7V907q2-7 19-9"/>
</svg>
</body>
</html>
```
FILE: styles.css
```css
* { box-sizing: border-box; }
html, body { height: 933px; overflow: hidden; }
body { margin: 0; background: #ebebeb; color: #111; font: 13.200px/16px "PT Sans", "Noto Sans", sans-serif; position: relative; }
svg { display: block; flex: none; }
.defs { position: absolute; }
.topbar { height: 57px; background: #fff; box-shadow: 0 1px 3px rgba(0,0,0,.6); position: relative; display: flex; align-items: flex-start; padding-left: 14px; }
.logo { width: 38px; height: 38px; margin-top: 5px; }
.nav { display: flex; margin-left: 26px; padding-top: 15px; }
.nav-item, .acc { display: flex; align-items: center; height: 20px; font-size: 14.200px; color: #000; white-space: nowrap; }
.nav-item span { margin-left: 4px; }
.nav-item .chev { margin-left: auto; }
.chev { width: 10px; height: 6px; }
.chev.s { width: 8px; height: 5px; }
.n1 { width: 74px; margin-right: 14px; }
.n2 { width: 81px; margin-right: 14px; }
.n2 span { margin-left: 3px; }
.n3 { width: 111px; margin-right: 14px; }
.n4 { width: 83px; margin-right: 14px; }
.n5 { width: 135px; }
.i12x14 { width: 12px; height: 14px; }
.i16x12 { width: 16px; height: 12px; }
.i13 { width: 13px; height: 13px; }
.i8x14 { width: 8px; height: 14px; }
.i13x14 { width: 13px; height: 14px; }
.i12x13 { width: 12px; height: 13px; }
.account { display: flex; margin-left: auto; padding: 15px 14px 0 0; }
.acc .chev { margin-left: auto; }
.a1 { width: 90px; margin-right: 13px; }
.a1 span { margin-left: 11px; }
.a2 { width: 33px; margin-right: 13px; }
.a3 { width: 35px; }

.menu { position: absolute; z-index: 5; left: 161px; top: 57px; width: 206px; height: 165px; background: #fff; border-radius: 0 0 3px 3px; box-shadow: 0 1px 4px rgba(0,0,0,.5); padding-top: 5px; }
.menu-item { display: flex; align-items: center; height: 31px; padding-left: 10px; font-size: 14.200px; color: #111; white-space: nowrap; }
.menu-item span { margin-left: 9px; }
.menu-item.active { color: #0b5ff0; }
.mi { width: 15px; height: 14px; }

.page { padding: 5px 10px 0 8px; display: flex; flex-direction: column; }
.card { background: #fff; border-radius: 3px; box-shadow: 0 1px 3px rgba(0,0,0,.5); }
.settings { height: 220px; margin-bottom: 5px; }
.settings-head { display: flex; align-items: center; justify-content: space-between; height: 45px; border-bottom: 1px solid #d0d0d0; padding: 0 15px 0 5px; }
.right { width: 6px; height: 8px; }
.filters { display: flex; gap: 4px; height: 70px; border-bottom: 1px solid #d0d0d0; padding: 12px 0 0 8px; margin-bottom: 4px; }
.field { width: 191.500px; }
.lbl { display: block; height: 16px; line-height: 16px; margin-bottom: 3px; color: #333; white-space: nowrap; }
.select { display: flex; align-items: center; height: 29px; border-radius: 3px; box-shadow: 0 1px 3px rgba(0,0,0,.6); padding: 0 11px 0 17px; white-space: nowrap; }
.select b { font-weight: 400; font-size: 12.200px; flex: 1; text-align: center; }
.select.first b { text-align: left; overflow: hidden; }
.select .chev { margin-top: 3px; }

table { border-collapse: collapse; table-layout: fixed; }
td, th { border: 1px solid #ccc; padding: 0; }
.week { width: 1173px; margin-left: 5px; text-align: center; font-size: 12px; line-height: 14px; }
.week tr { height: 23px; }
.week .wh { height: 26px; background: #e8e8e8; }
.w173 { width: 173px; } .w166 { width: 166px; } .w167 { width: 167px; }
.tot { font-weight: 700; font-size: 13px; }
.sel { background: #0b5ff0; color: #fff; }

.route { height: 412px; margin-bottom: 5px; }
.toolbar { display: flex; align-items: flex-start; height: 44px; padding-top: 10px; }
.check { width: 18px; height: 18px; margin: 8px 0 0 11px; border: 2px solid #222; border-radius: 2px; }
.all { width: 123px; margin: 9px 0 0 9px; color: #222; white-space: nowrap; }
.search { width: 131px; height: 31px; border-bottom: 1px solid #ccc; color: #999; font-size: 12px; padding-top: 9px; letter-spacing: .2px; }
.search.far { width: 131px; margin-left: 538px; height: 30px; padding-top: 8px; }
.btn { display: flex; align-items: center; height: 29px; background: #0b5ff0; color: #fff; border-radius: 3px; box-shadow: 0 1px 3px rgba(0,0,0,.7); font-size: 12.200px; margin-left: 2px; }
.btn span { flex: 1; margin-left: 8px; white-space: nowrap; }
.exp { width: 110px; padding: 0 10px 0 10px; }
.upd { width: 101px; padding: 0 9px 0 9px; }
.bi { width: 13px; height: 12px; }
.route-body { display: flex; }
.side { width: 299px; padding-left: 6px; }
.list-wrap { display: flex; height: 335px; margin-top: 2px; }
.list { width: 274px; overflow: hidden; background: #d3ebc8; border: 1px solid #ccc; border-bottom: 0; border-radius: 3px 3px 0 0; }
.stop { position: relative; padding: 15px 15px; border-bottom: 1px solid #ccc; font-size: 12.200px; line-height: 12px; color: #1b861b; }
.stop p { margin: 0; white-space: nowrap; }
.stop i { position: absolute; right: 15px; bottom: 15px; font-style: normal; color: #000; }
.scroll { width: 17px; background: #ececec; display: flex; flex-direction: column; align-items: center; padding: 7px 0 7px 1px; }
.up { border: 4px solid transparent; border-top: 0; border-bottom-color: #666; margin-bottom: 5px; }
.thumb { width: 13px; height: 57px; background: #a2a2a2; }
.down { border: 4px solid transparent; border-bottom: 0; border-top-color: #111; margin-top: auto; }
.total { padding: 3px 0 0 20px; white-space: nowrap; }
.map { position: relative; width: 878px; height: 360px; }
.tiles { width: 878px; height: 360px; }
.field-a { fill: #fae9ca; }
.hedge { fill: none; stroke: #abd8a0; stroke-width: 4; }
.street { fill: none; stroke: #bfbcb7; stroke-width: 2.400; }
.town { stroke: #a8a8a8; }
.rail { fill: none; stroke: #444; stroke-width: 4; }
.border { fill: none; stroke: #b855b0; stroke-width: 5.500; stroke-dasharray: 18 6 5 6; }
.cas { fill: none; stroke: #c9c95c; stroke-width: 13; }
.casedge { fill: none; stroke: #b5b552; stroke-width: 13; }
.main { fill: none; stroke: #f6f99c; stroke-width: 8; }
.wroadc { fill: none; stroke: #c4c0ba; stroke-width: 10; }
.wroad { fill: none; stroke: #fff; stroke-width: 7; }
.track { fill: none; stroke: #1474e0; stroke-linejoin: round; }
.place { font: 31px "Noto Sans", sans-serif; fill: #111; stroke: #fff; stroke-opacity: .75; stroke-width: 5px; paint-order: stroke; }
.place .pl { font-size: 40px; }
.shield rect { fill: #e8e8c0; stroke: #98985c; stroke-width: 3; }
.shield text { font: 600 29px "Noto Sans", sans-serif; fill: #3c3c14; }
.pin circle { fill: #2f7200; stroke: #fbfff0; stroke-width: 5; }
.pin ellipse { fill: #0b5ff0; }
.pin text { fill: #e4efff; font: bold 24px "Liberation Sans", sans-serif; text-anchor: middle; }
.zoomctl { position: absolute; left: 10px; top: 10px; width: 34px; border: 2px solid rgba(130,115,95,.65); border-radius: 4px; background: #fff; background-clip: padding-box; }
.zoomctl span { display: flex; align-items: center; justify-content: center; height: 30px; border-bottom: 1px solid #bbb; }
.zoomctl span:last-child { border: 0; }
.zoomctl svg { width: 14px; height: 14px; }
.nocoord { position: absolute; left: 756px; top: 10px; width: 112px; height: 38px; background: rgba(248,248,248,.95); color: #333; font: 12.200px/38px "Liberation Sans", sans-serif; text-align: center; }
.attr { position: absolute; right: 0; bottom: 0; height: 16px; padding: 0 5px; background: rgba(255,255,255,.7); color: #222; font: 11.200px/16px "Liberation Sans", sans-serif; }
.attr a { color: #0067a0; }

.clients { padding: 5px 0 0 5px; height: 250px; }
.grid { width: 1173px; font-size: 12.200px; line-height: 14px; }
.grid tr { height: 29px; }
.grid tr.h { height: 25px; font-size: 12px; }
.grid td, .grid th { background: #e8e8e8; text-align: left; padding: 0 5px; white-space: nowrap; }
.grid .m { text-align: center; padding: 0; }
.grid th.sel { background: #0b5ff0; }
.grid td.k { background: #fff; padding: 0; }
.k svg { width: 18px; height: 16px; margin: -2px auto 0; transform: translateX(.5px); }
.c1 { width: 274px; } .c2 { width: 534px; } .c3 { width: 142px; } .d { width: 32px; } .d6 { width: 29px; } .d7 { width: 33px; }

.status { position: absolute; left: 0; top: 914px; width: 60px; height: 20px; background: #d2d8e0; border: 1px solid #bbb; border-left: 0; border-radius: 0 3px 0 0; font-size: 12.200px; line-height: 20px; overflow: hidden; text-indent: -3px; color: #333; }
.marks { position: absolute; left: 0; top: 0; width: 1201px; height: 933px; z-index: 9; pointer-events: none; fill: none; stroke: #e8080b; stroke-width: 5.200; stroke-linejoin: round; }
```
